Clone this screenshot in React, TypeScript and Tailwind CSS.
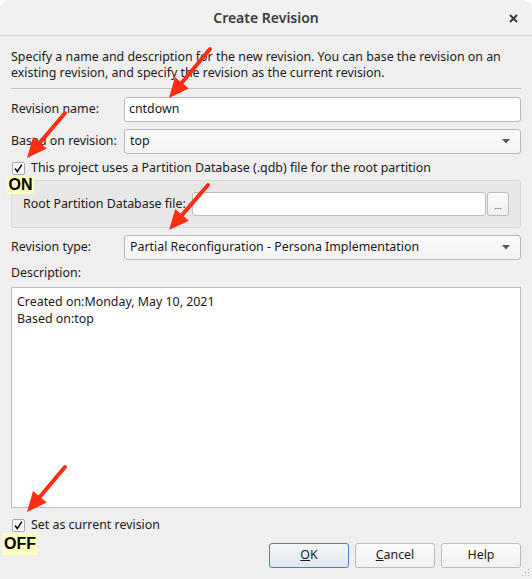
import React from "react";

function Arrow({ x1, y1, x2, y2 }: { x1: number; y1: number; x2: number; y2: number }) {
  const dx = x2 - x1;
  const dy = y2 - y1;
  const len = Math.sqrt(dx * dx + dy * dy);
  const ux = dx / len;
  const uy = dy / len;
  const hl = 20;
  const hw = 9;
  const bx = x2 - ux * hl;
  const by = y2 - uy * hl;
  const px = -uy;
  const py = ux;
  const pts = `${x2},${y2} ${bx + px * hw},${by + py * hw} ${bx - px * hw},${by - py * hw}`;
  return (
    <g>
      <line x1={x1} y1={y1} x2={bx + ux * 2} y2={by + uy * 2} stroke="#ff2e12" strokeWidth={4} strokeLinecap="round" />
      <polygon points={pts} fill="#ff2e12" />
    </g>
  );
}

function Check() {
  return (
    <div className="w-[13px] h-[13px] shrink-0 bg-white border border-[#a9a9a9] rounded-[2px] flex items-center justify-center">
      <svg width="11" height="11" viewBox="0 0 11 11">
        <path d="M2 5.5 L4.3 8.6 L8.8 1.6" fill="none" stroke="#111" strokeWidth="1.7" strokeLinejoin="miter" />
      </svg>
    </div>
  );
}

function Combo({ text }: { text: string }) {
  return (
    <div className="flex-1 h-[25px] border border-[#b9b9b9] rounded-[3px] bg-gradient-to-b from-[#fbfbfb] to-[#f3f3f3] flex items-center pl-[5px] pr-[10px]">
      <span className="flex-1">{text}</span>
      <svg width="8" height="5" viewBox="0 0 8 5">
        <path d="M0 0 L8 0 L4 4.5 Z" fill="#5a5a5a" />
      </svg>
    </div>
  );
}

export default function App() {
  return (
    <div className="w-[532px] h-[579px] bg-white relative font-['Noto_Sans',sans-serif] text-[12.4px] text-[#1a1a1a] overflow-hidden">
      <div className="h-full rounded-t-[9px] bg-[#efefef] flex flex-col overflow-hidden">
        <div className="h-[36px] shrink-0 bg-[#f2f2f2] border-b border-[#cdcdcd] flex items-center justify-center relative">
          <span className="text-[14px] font-semibold text-[#3b3b3b]">Create Revision</span>
          <svg className="absolute right-[14px] top-[14px]" width="9" height="9" viewBox="0 0 9 9">
            <path d="M1 1 L8 8 M8 1 L1 8" stroke="#3b3b3b" strokeWidth="2" />
          </svg>
        </div>
        <div className="px-[11px] flex flex-col">
          <p className="mt-[13px] leading-[16px]">
            Specify a name and description for the new revision. You can base the revision on an existing revision, and
            specify the revision as the current revision.
          </p>
          <div className="mt-[7px] h-px bg-[#c4c4c4]" />
          <div className="mt-[8px] flex items-center">
            <span className="w-[113px]">Revision name:</span>
            <div className="flex-1 h-[25px] border border-[#b9b9b9] rounded-[3px] bg-white flex items-center pl-[4px]">
              cntdown
            </div>
          </div>
          <div className="mt-[7px] flex items-center">
            <span className="w-[113px]">Based on revision:</span>
            <Combo text="top" />
          </div>
          <div className="mt-[6px] h-[16px] flex items-center gap-[6px] pl-px">
            <Check />
            <span>This project uses a Partition Database (.qdb) file for the root partition</span>
          </div>
          <div className="mt-[4px] h-[48px] bg-[#e8e8e8] border border-[#dadada] rounded-[2px] flex items-center pl-[11px] pr-[11px]">
            <span className="shrink-0">Root Partition Database file:</span>
            <div className="ml-[6px] flex-1 h-[24px] border border-[#bdbdbd] rounded-[3px] bg-white" />
            <div className="ml-px w-[22px] h-[24px] border border-[#bdbdbd] rounded-[3px] bg-gradient-to-b from-[#fbfbfb] to-[#f1f1f1] flex items-center justify-center text-[9px] leading-none pt-[3px]">
              ...
            </div>
          </div>
          <div className="mt-[7px] flex items-center">
            <span className="w-[113px]">Revision type:</span>
            <Combo text="Partial Reconfiguration - Persona Implementation" />
          </div>
          <div className="mt-[5px] leading-[16px]">Description:</div>
          <div className="mt-[6px] h-[221px] bg-white border border-[#bdbdbd] pt-[5px] px-[5px] leading-[17px]">
            <div>Created on:Monday, May 10, 2021</div>
            <div>Based on:top</div>
          </div>
          <div className="mt-[9px] h-[16px] flex items-center gap-[6px] pl-px">
            <Check />
            <span>Set as current revision</span>
          </div>
          <div className="mt-[10px] flex justify-end gap-[6px]">
            <div className="w-[80px] h-[25px] border border-[#4f7fb3] rounded-[3px] bg-gradient-to-b from-[#f4f7fa] to-[#e0e7ef] flex items-center justify-center">
              <span><span className="underline">O</span>K</span>
            </div>
            <div className="w-[80px] h-[25px] border border-[#bcbcbc] rounded-[3px] bg-gradient-to-b from-[#fbfbfb] to-[#f1f1f1] flex items-center justify-center">
              <span><span className="underline">C</span>ancel</span>
            </div>
            <div className="w-[80px] h-[25px] border border-[#bcbcbc] rounded-[3px] bg-gradient-to-b from-[#fbfbfb] to-[#f1f1f1] flex items-center justify-center">
              <span>Help</span>
            </div>
          </div>
        </div>
      </div>

      <div className="absolute left-[7px] top-[176px] w-[27px] h-[18px] bg-[#ffffbb] flex items-center justify-center font-['Liberation_Sans',sans-serif] font-bold text-[16px] text-black">
        ON
      </div>
      <div className="absolute left-[3px] top-[533px] w-[34px] h-[22px] bg-[#ffffbb] flex items-center justify-center font-['Liberation_Sans',sans-serif] font-bold text-[16px] text-black">
        OFF
      </div>

      <svg className="absolute right-[2px] bottom-[2px]" width="8" height="8" viewBox="0 0 8 8">
        <g fill="#b5b5b5">
          <rect x="6" y="0" width="1" height="1" />
          <rect x="3" y="3" width="1" height="1" />
          <rect x="6" y="3" width="1" height="1" />
          <rect x="0" y="6" width="1" height="1" />
          <rect x="3" y="6" width="1" height="1" />
          <rect x="6" y="6" width="1" height="1" />
        </g>
      </svg>

      <svg className="absolute inset-0 pointer-events-none" width="532" height="579" viewBox="0 0 532 579">
        <Arrow x1={210} y1={49} x2={169} y2={98} />
        <Arrow x1={65} y1={113} x2={27} y2={158} />
        <Arrow x1={208} y1={185} x2={169} y2={230} />
        <Arrow x1={65} y1={467} x2={27} y2={512} />
      </svg>
    </div>
  );
}
